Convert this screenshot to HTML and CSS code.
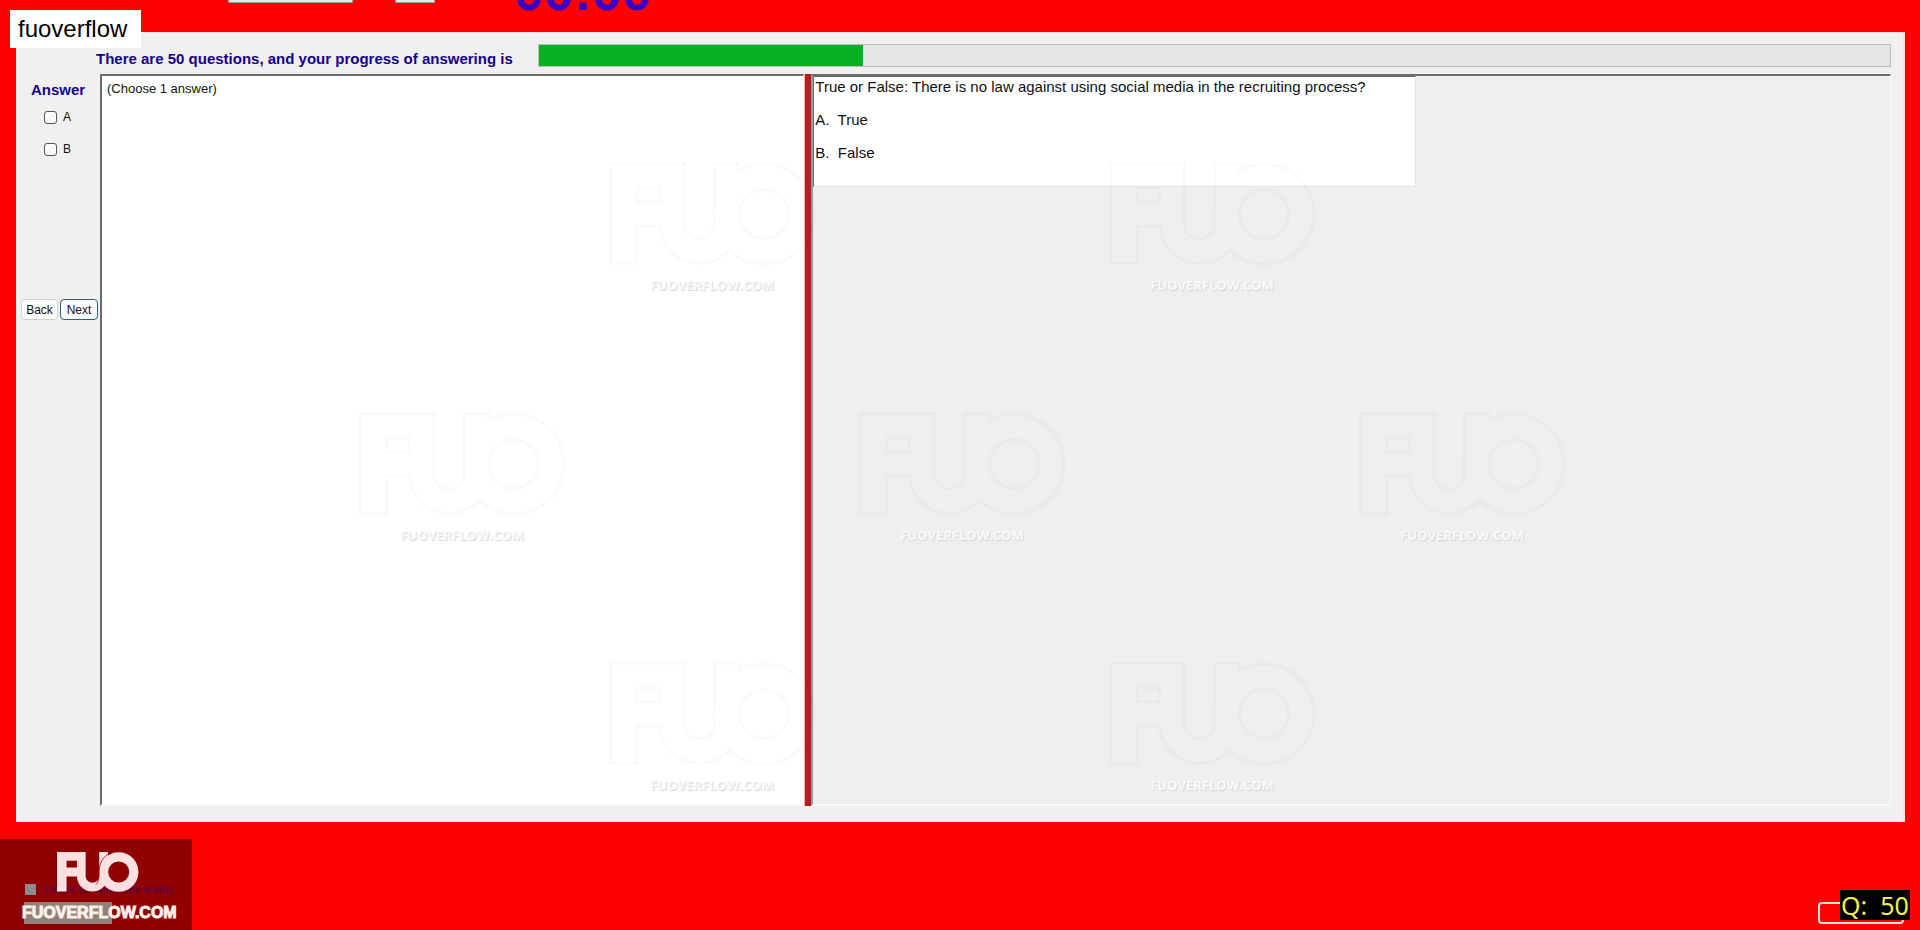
FILE: index.html
```html
<!DOCTYPE html>
<html lang="en">
<head>
    <meta charset="UTF-8">
    <meta name="viewport" content="width=device-width, initial-scale=1.0">
    <title>fuoverflow</title>
    <link rel="stylesheet" href="styles.css">
</head>
<body>
    <svg class="defs" aria-hidden="true">
        <defs>
            <g id="fuo-shape">
                <path d="M0 0H61V22H24V39H61V61H24V99H0Z" stroke="none"/>
                <path d="M61 0V60a28 28 0 0 0 56 0V0" fill="none" stroke-width="22"/>
                <circle cx="155" cy="50" r="38" fill="none" stroke-width="23"/>
            </g>
            <mask id="fuo-outline" maskUnits="userSpaceOnUse" x="-5" y="-5" width="216" height="112">
                <g fill="#fff" stroke="#fff">
                    <path d="M-3 -3H63V25H27V36H63V64H27V102H-3Z" stroke="none"/>
                    <path d="M61 -3V60a28 28 0 0 0 56 0V-3" fill="none" stroke-width="28"/>
                    <circle cx="155" cy="50" r="38" fill="none" stroke-width="29"/>
                </g>
                <use href="#fuo-shape" fill="#000" stroke="#000"/>
            </mask>
            <symbol id="fuo-mark" viewBox="-3 -3 210 106">
                <rect x="-5" y="-5" width="216" height="112" mask="url(#fuo-outline)"/>
            </symbol>
            <symbol id="fuo-logo" viewBox="0 0 206 100">
                <use href="#fuo-shape" fill="#ffe0e0" stroke="#ffe0e0"/>
                <path d="M128 5C112 16 106 32 106 50c0 16-2 24-8 32" fill="none" stroke="#900000" stroke-width="2"/>
            </symbol>
        </defs>
    </svg>

    <header class="topbar">
        <select class="top-select" aria-label="Font"><option></option></select>
        <select class="top-size" aria-label="Size"><option></option></select>
        <span class="timer">00:00</span>
    </header>

    <main class="exam">
        <div class="progress-row">
            <label for="progress">There are 50 questions, and your progress of answering is</label>
            <progress id="progress" max="100" value="24"></progress>
        </div>
        <div class="work">
            <aside class="answers">
                <h2>Answer</h2>
                <label><input type="checkbox"> A</label>
                <label><input type="checkbox"> B</label>
                <div class="nav">
                    <button type="button">Back</button>
                    <button type="button" class="active">Next</button>
                </div>
            </aside>
            <section class="pane choose">(Choose 1 answer)</section>
            <div class="splitter"></div>
            <section class="pane content">
                <div class="question">
                    <p>True or False: There is no law against using social media in the recruiting process?</p>
                    <p>A.&nbsp; True</p>
                    <p>B.&nbsp; False</p>
                </div>
            </section>
        </div>
    </main>

    <!-- watermarks over the panes -->
    <div class="watermarks">
        <div class="mark-row odd">
            <div class="mark"><svg><use href="#fuo-mark"/></svg>FUOVERFLOW.COM</div>
            <div class="mark"><svg><use href="#fuo-mark"/></svg>FUOVERFLOW.COM</div>
        </div>
        <div class="mark-row">
            <div class="mark"><svg><use href="#fuo-mark"/></svg>FUOVERFLOW.COM</div>
            <div class="mark"><svg><use href="#fuo-mark"/></svg>FUOVERFLOW.COM</div>
            <div class="mark"><svg><use href="#fuo-mark"/></svg>FUOVERFLOW.COM</div>
        </div>
        <div class="mark-row odd">
            <div class="mark"><svg><use href="#fuo-mark"/></svg>FUOVERFLOW.COM</div>
            <div class="mark"><svg><use href="#fuo-mark"/></svg>FUOVERFLOW.COM</div>
        </div>
    </div>

    <div class="tag">fuoverflow</div>

    <footer class="bottom">
        <div class="brand">
            <label class="finish"><input type="checkbox"> I want to finish the exam.</label>
            <div class="finish-button"></div>
            <svg class="brand-logo"><use href="#fuo-logo"/></svg>
            <span class="brand-name">FUOVERFLOW.COM</span>
        </div>
        <div class="counter">
            <button type="button" class="exit" aria-label="Exit"></button>
            <span class="count">Q:&nbsp; 50</span>
        </div>
    </footer>
</body>
</html>
```
FILE: styles.css
```css
* {
    box-sizing: border-box;
}
body {
    margin: 0;
    min-height: 100vh;
    display: flex;
    flex-direction: column;
    position: relative;
    overflow: hidden;
    background: #ff0000;
    font-family: "Liberation Sans", Arial, sans-serif;
    font-size: 13px;
    color: #111;
}
.defs {
    position: absolute;
    width: 0;
    height: 0;
}

/* top strip, scrolled almost out of view */
.topbar {
    height: 32px;
    display: flex;
    align-items: flex-start;
    padding-left: 228px;
}
.topbar select {
    height: 24px;
    margin-top: -21px;
    border: 1px solid #999;
    background: #f4e8e8;
}
.top-select {
    width: 125px;
}
.top-size {
    width: 40px;
    margin-left: 42px;
}
.timer {
    margin: -38px 0 0 79px;
    font-size: 54px;
    font-weight: bold;
    line-height: 58px;
    color: #3a00c8;
}

/* exam window */
.exam {
    flex: 1;
    display: flex;
    flex-direction: column;
    margin: 0 15px 0 16px;
    padding: 11px 12px 16px 0;
    background: #f0f0f0;
    border-top: 1px solid #ffdcdc;
    border-right: 2px solid #ffdcdc;
}
.progress-row {
    display: flex;
    align-items: center;
    gap: 25px;
    padding-left: 80px;
    margin-bottom: 7px;
}
.progress-row label {
    padding-top: 6px;
    font-size: 15px;
    font-weight: bold;
    line-height: 17px;
    color: #14008c;
}
progress {
    appearance: none;
    flex: 1;
    height: 23px;
    border: 1px solid #bcbcbc;
    background: #e6e6e6;
}
progress::-webkit-progress-bar {
    background: #e6e6e6;
}
progress::-webkit-progress-value {
    background: #06b025;
}
.work {
    flex: 1;
    display: flex;
}
.answers {
    width: 84px;
    flex: none;
    display: flex;
    flex-direction: column;
}
.answers h2 {
    margin: 7px 0 2px;
    padding-left: 15px;
    font-size: 15px;
    line-height: 18px;
    color: #14008c;
}
.answers label {
    display: flex;
    align-items: center;
    gap: 6px;
    height: 32px;
    padding-left: 28px;
    font-size: 12px;
}
input[type="checkbox"] {
    appearance: none;
    width: 13px;
    height: 13px;
    margin: 0;
    border: 1px solid #555;
    border-radius: 3px;
    background: #f8f8f8;
}
.nav {
    display: flex;
    gap: 2px;
    margin-top: 134px;
    padding-left: 5px;
}
.nav button {
    width: 37px;
    height: 21px;
    padding: 0;
    border: 1px solid #d0d0d0;
    border-radius: 4px;
    background: #fdfdfd;
    font-family: inherit;
    font-size: 12px;
    color: #111;
}
.nav .active {
    width: 38px;
    border-color: #2a6478;
}
.pane {
    border: 2px solid;
    border-color: #6c6c6c #fafafa #fafafa #6c6c6c;
    border-right-width: 1px;
}
.choose {
    flex: 696;
    padding: 4px 5px;
    background: #fff;
    line-height: 18px;
}
.splitter {
    width: 7px;
    background: #b81c22;
    border-left: 1px solid #ffb0b0;
    position: relative;
    z-index: 2;
}
.content {
    flex: 1084;
    background: #efefef;
    border-left-color: #999;
}
.question {
    width: 56%;
    height: 111px;
    padding: 1px;
    background: #fff;
    border: 1px solid #e3e3e3;
    border-top-color: #6c6c6c;
    border-left-color: #6c6c6c;
    font-size: 15px;
    line-height: 18px;
}
.question p {
    margin: 0 0 15px;
}

/* watermarks */
.watermarks {
    position: absolute;
    inset: 162px 0 0 0;
    pointer-events: none;
}
.mark-row {
    display: flex;
    gap: 294px;
    height: 250px;
    padding-left: 359px;
}
.mark-row.odd {
    padding-left: 609px;
}
.mark {
    width: 206px;
    text-align: center;
    font-family: "Open Sans", sans-serif;
    font-size: 13px;
    font-weight: bold;
    line-height: 20px;
    color: #fafafa;
    text-shadow: 1px 1px 1px #d4d4d4;
}
.mark svg {
    display: block;
    width: 206px;
    height: 104px;
    margin-bottom: 9px;
    fill: rgba(0, 0, 0, 0.02);
}
.tag {
    position: absolute;
    left: 10px;
    top: 10px;
    padding: 5px 14px 5px 8px;
    background: #fff;
    font-size: 24px;
    line-height: 28px;
    color: #000;
}

/* bottom strip */
.bottom {
    display: flex;
    justify-content: space-between;
    align-items: flex-end;
    height: 108px;
}
.brand {
    position: relative;
    width: 192px;
    height: 91px;
    padding: 13px 0 0 22px;
    background: #900000;
}
.brand-logo {
    position: relative;
    display: block;
    width: 82px;
    height: 40px;
    margin-left: 35px;
}
.brand-name {
    position: relative;
    display: block;
    margin-top: 10px;
    font-size: 16px;
    font-weight: bold;
    line-height: 22px;
    color: #fff0e8;
    -webkit-text-stroke: 1px #fff0e8;
}
.finish {
    position: absolute;
    left: 25px;
    top: 44px;
    display: flex;
    align-items: center;
    gap: 8px;
    font-size: 11px;
    font-weight: bold;
    white-space: nowrap;
    color: #600048;
}
.finish input[type="checkbox"] {
    width: 11px;
    height: 11px;
    border: 0;
    border-radius: 0;
    background: #908a8a;
}
.finish-button {
    position: absolute;
    left: 24px;
    top: 63px;
    width: 88px;
    height: 22px;
    background: #908078;
}
.counter {
    position: relative;
    width: 102px;
    height: 40px;
}
.exit {
    width: 86px;
    height: 22px;
    margin-top: 12px;
    border: 2px solid #ffe0e0;
    border-radius: 4px;
    background: #ff0000;
}
.count {
    position: absolute;
    left: 22px;
    top: 0;
    width: 70px;
    background: #000;
    font-family: "Noto Sans", sans-serif;
    font-size: 25px;
    line-height: 30px;
    text-align: center;
    white-space: nowrap;
    color: #f0f050;
}
```
